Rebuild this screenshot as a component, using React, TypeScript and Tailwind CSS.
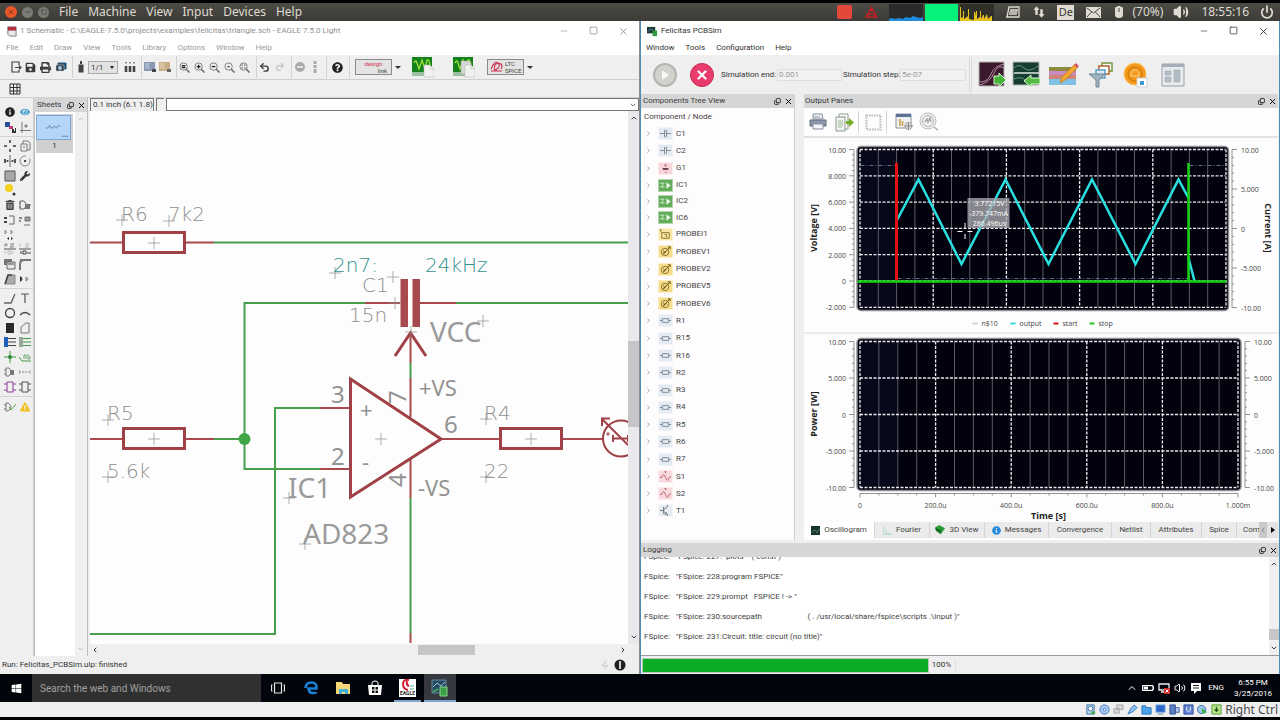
import type { ReactNode } from "react";
import {
  FaBatteryHalf,
  FaExclamationTriangle,
  FaEye,
  FaInfoCircle,
  FaPrint,
  FaQuestionCircle,
  FaSave,
  FaTrashAlt,
  FaWindows,
  FaWrench,
} from "react-icons/fa";
import {
  ChevronDown,
  ChevronLeft,
  ChevronRight,
  ChevronUp,
  Copy,
  Minus,
  Power,
  Redo2,
  Square,
  Undo2,
  Volume2,
  X,
} from "lucide-react";

type ArtProps = { className?: string; box?: string; children: ReactNode };

function Art({ className = "size-3", box = "0 0 12 12", children }: ArtProps) {
  return (
    <svg className={`shrink-0 ${className}`} viewBox={box} fill="none" stroke="#444" aria-hidden="true">
      {children}
    </svg>
  );
}

/* ---------- host top bar ---------- */

const hostMenus = ["File", "Machine", "View", "Input", "Devices", "Help"];

function HostBar() {
  return (
    <header className="flex h-[18px] items-center bg-linear-to-b from-[#4c4b46] to-[#3c3b37] font-['Noto_Sans',sans-serif] text-[#dfdbd2]">
      <div className="flex items-center gap-[5px] pl-[5px]">
        <button aria-label="Close" className="flex size-[12px] items-center justify-center rounded-full bg-[#e8562a]">
          <X className="size-2 text-[#5a2412]" />
        </button>
        <button aria-label="Minimize" className="flex size-[11px] items-center justify-center rounded-full bg-[#7b7a74]">
          <Minus className="size-2 text-[#3c3b37]" />
        </button>
        <button aria-label="Maximize" className="flex size-[11px] items-center justify-center rounded-full bg-[#7b7a74]">
          <Square className="size-1.5 text-[#3c3b37]" />
        </button>
      </div>
      <nav className="flex gap-[10px] pl-[10px] text-[12px] leading-[14px]">
        {hostMenus.map((name) => (
          <button key={name}>{name}</button>
        ))}
      </nav>
      <div className="ml-auto flex h-full items-center pr-[6px] text-[12px] leading-[14px]">
        <span className="mr-[12px] h-[14px] w-[15px] rounded-xs bg-[#e2493a]" />
        <Art className="mr-[10px] h-3 w-[15px]" box="0 0 15 12">
          <path d="M7.500 1 13 11H2zM7.500 1v5M4 8l7 0M2 11l3-3M13 11l-3-3" stroke="#c41f22" strokeWidth="1.300" />
        </Art>
        <Art className="h-[17px] w-[34px] bg-[#2b2b2b]" box="0 0 34 17">
          <path d="M0 17v-2l3-1 3 1 4-1 4 1 3-2 4 1 3-2 3 1 4 1 3-1v4z" fill="#1f8ddb" stroke="none" />
        </Art>
        <span className="mx-[2px] h-[17px] w-[33px] bg-[#06f07c]" />
        <Art className="mr-[11px] h-[17px] w-[34px] bg-[#2f2e29]" box="0 0 34 17">
          <path
            d="M0 17V3h1v11l2-1V7h1v8l4-3V5h1v10l5 1V8h1v4l1-5h1v8l3-2V7h1v8l2-4h1v4l3-5 1 5 3-3h1v5z"
            fill="#e5c21c"
            stroke="none"
          />
        </Art>
        <Art className="mr-[12px] h-3 w-[15px]" box="0 0 15 12">
          <path d="M4 1h10v10H2zM5 4h8M4.500 6h8M4 8h8M1 11h12" stroke="#dfdbd2" strokeWidth="1.300" />
        </Art>
        <Art className="mr-[11px] h-[14px] w-[14px]" box="0 0 14 14">
          <path d="M4.500 1 8 5H6v5H3V5H1zM9.500 13 6 9h2V4h3v5h2z" fill="#dfdbd2" stroke="#45443f" strokeWidth=".5" />
        </Art>
        <span className="mr-[12px] flex h-[15px] w-[17px] items-center justify-center bg-[#dfdbd2] text-[11px] text-[#3c3b37]">De</span>
        <Art className="mr-[13px] h-[11px] w-[15px]" box="0 0 15 11">
          <path d="M0 0h15v11H0z" fill="#dfdbd2" stroke="none" />
          <path d="m1 1 6.500 5L14 1M1 10l4.500-5M14 10 9.500 5" stroke="#4b4a45" />
        </Art>
        <Art className="mr-[8px] h-[14px] w-[10px]" box="0 0 10 14">
          <path d="M3.500 1h3v1H8q1 0 1 1v7q0 3-4 3t-4-3V3q0-1 1-1h1.500z" fill="#dfdbd2" stroke="none" />
          <path d="M5 3v4" stroke="#4b4a45" />
        </Art>
        <span className="mr-[10px] whitespace-nowrap">(70%)</span>
        <Volume2 className="mr-[12px] size-4 fill-[#dfdbd2]" />
        <time className="mr-[11px] whitespace-nowrap">18:55:16</time>
        <Power className="size-[14px] stroke-[3]" />
      </div>
    </header>
  );
}

/* ---------- shared window parts ---------- */

type TitleProps = { title: string; dim?: boolean; icon: ReactNode };

function TitleBar({ title, dim, icon }: TitleProps) {
  return (
    <div className={`flex h-[20px] items-center gap-[3px] bg-white pl-[6px] ${dim ? "text-[#8f8f8f]" : "text-[#333]"}`}>
      {icon}
      <h2 className="min-w-0 flex-1 truncate">{title}</h2>
      <div className="flex gap-[15px] pr-[8px]">
        <button aria-label="Minimize" className="flex w-[15px] justify-center">
          <Minus className="size-[10px] stroke-[1.5]" />
        </button>
        <button aria-label="Maximize" className="flex w-[15px] justify-center">
          <Square className="size-[9px] stroke-2" />
        </button>
        <button aria-label="Close" className="flex w-[15px] justify-center">
          <X className="size-[11px] stroke-2" />
        </button>
      </div>
    </div>
  );
}

function DockHeader({ title, className = "" }: { title: string; className?: string }) {
  return (
    <div className={`flex h-[14px] items-center bg-[#d6d6d6] text-[#3a3a3a] ${className}`}>
      <h3 className="flex-1 whitespace-nowrap">{title}</h3>
      <div className="flex items-center gap-[3px] pr-[1px] text-black">
        <button aria-label={`Float ${title}`}>
          <Copy className="size-[7px] -scale-y-100 stroke-[2.5]" />
        </button>
        <button aria-label={`Close ${title}`}>
          <X className="size-[9px] stroke-[2.5]" />
        </button>
      </div>
    </div>
  );
}

function Sep() {
  return <span className="h-[22px] w-[5px] shrink-0 border-r border-[#d3d3d3]" />;
}

function Slot({ label, children }: { label: string; children: ReactNode }) {
  return (
    <button aria-label={label} title={label} className="flex h-[15px] w-[15px] shrink-0 items-center justify-center text-[#3c3c3c]">
      {children}
    </button>
  );
}

function Lens({ mark }: { mark: string }) {
  return (
    <Art className="size-[11px]">
      <circle cx="5" cy="5" r="4" stroke="#777" />
      <path d="m8 8 3.500 3.500" strokeWidth="1.600" stroke="#666" />
      <path d={mark} stroke="#222" strokeWidth="1.400" />
    </Art>
  );
}

/* ---------- schematic editor ---------- */

const editorMenus = ["File", "Edit", "Draw", "View", "Tools", "Library", "Options", "Window", "Help"];

function WaveIcon({ two }: { two?: boolean }) {
  return (
    <Art className="size-[22px]" box="0 0 22 22">
      <path d="M0 1h20v19H0z" fill="#15801c" stroke="none" />
      <path d="M0 16h12v4H0z" fill="#9cc0a4" stroke="none" />
      <path d="M2 7q2-4 3 0l2 6 3-9 3 9 2-9q2-1 3 5" stroke="#9be23a" strokeWidth="1.300" />
      {two && <path d="M8 5h8l2 2v11H8z" fill="#d5d9d5" stroke="#aaa" strokeWidth=".5" />}
      <path d="M12 9h6l4 4v8H12z" fill="#f1f3f1" stroke="#b9b9b9" strokeWidth=".6" />
      <path d="M18 9v4h4" stroke="#b9b9b9" strokeWidth=".6" />
    </Art>
  );
}

function EditorToolbar() {
  return (
    <div className="flex h-[25px] items-center overflow-hidden border-b border-[#cfcfcf] bg-[#efefef] pl-[8px]">
      <Slot label="Open">
        <Art><path d="M6 1H2v10h7V9M9 4V1H5M5 6.500h6M9 4.500l2 2-2 2" strokeWidth="1.200" /></Art>
      </Slot>
      <Slot label="Save"><FaSave className="size-[11px]" /></Slot>
      <Slot label="Print"><FaPrint className="size-[11px]" /></Slot>
      <Slot label="CAM">
        <Art>
          <path d="M3 2h8v6H3z" fill="#1e4f74" stroke="#1e4f74" />
          <path d="M1 4h8v6H1z" fill="#2f3a44" stroke="#ddd" strokeWidth=".5" />
          <circle cx="5" cy="7" r="2" fill="#9ec7e4" stroke="none" />
        </Art>
      </Slot>
      <Sep />
      <Slot label="Board">
        <Art><path d="M6 0v3M4.500 4.500h3v6h-3z" fill="#444" strokeWidth="2" /></Art>
      </Slot>
      <div className="relative shrink-0">
        <select
          aria-label="Sheet"
          className="block h-[13px] w-[30px] appearance-none border border-[#a9a9a9] bg-[#e2e2e2] pl-[2px] text-[8px] leading-[11px] text-[#333]"
          defaultValue="1/1"
        >
          <option>1/1</option>
        </select>
        <span className="pointer-events-none absolute top-[5px] right-[4px] size-0 border-x-[2px] border-t-[3px] border-x-transparent border-t-[#222]" />
      </div>
      <span className="w-[4px] shrink-0" />
      <Slot label="Use library">
        <Art><path d="M2 1v2M6 1v2M10 1v2" stroke="#888" strokeWidth="2" strokeDasharray="1 .5" /><path d="M2 5v6M6 5v6M10 5v6" strokeWidth="2.600" /></Art>
      </Slot>
      <Sep />
      <Slot label="Script">
        <Art><path d="M0 1h11v9H0z" fill="#8997b5" stroke="none" /><path d="M1 3h5M1 5h4M1 7h5" stroke="#c8d2e4" /><path d="M8 8h4v3H8z" fill="#444" stroke="none" /></Art>
      </Slot>
      <Slot label="Run ULP">
        <Art><path d="M0 1h11v9H0z" fill="#c9ad84" stroke="none" /><path d="M1 3h5M1 5h4M1 7h5" stroke="#e6d6ba" /><path d="M8 8h4v3H8z" fill="#666" stroke="none" /></Art>
      </Slot>
      <Sep />
      <Slot label="Zoom to fit"><Lens mark="M3 4h4M3 6h4" /></Slot>
      <Slot label="Zoom in"><Lens mark="M3 5h4M5 3v4" /></Slot>
      <Slot label="Zoom out"><Lens mark="M3 5h4" /></Slot>
      <Slot label="Redraw"><Lens mark="M4 5h2" /></Slot>
      <Slot label="Zoom select"><Lens mark="M3 3.500h1M6 3.500h1M3 6.500h1M6 6.500h1" /></Slot>
      <Sep />
      <Slot label="Undo"><Undo2 className="size-[11px] stroke-[3]" /></Slot>
      <Slot label="Redo"><Redo2 className="size-[10px] stroke-[3] text-[#c4c4c4]" /></Slot>
      <Sep />
      <Slot label="Stop">
        <Art><circle cx="6" cy="6" r="5" fill="#aaa" stroke="none" /><path d="M3 6h6" stroke="#eee" strokeWidth="1.600" /></Art>
      </Slot>
      <Slot label="Go">
        <Art><path d="M6 0v3M6 4v3M6 8v4" stroke="#aaa" strokeWidth="3" /></Art>
      </Slot>
      <Sep />
      <span className="w-[3px] shrink-0" />
      <Slot label="Help"><FaQuestionCircle className="size-[11px] text-[#222]" /></Slot>
      <Sep />
      <button aria-label="Design link" className="ml-[5px] flex h-[16px] w-[37px] shrink-0 flex-col border border-[#8b8b8b] bg-[#e3e3e3] px-[4px] text-[6px] leading-[7px] text-[#d23455]">
        <span>design</span>
        <span className="self-end text-[#444]">link</span>
      </button>
      <Caret />
      <button aria-label="Simulate" className="ml-[11px] shrink-0"><WaveIcon /></button>
      <button aria-label="Simulate copy" className="ml-[19px] shrink-0"><WaveIcon two /></button>
      <button aria-label="LTspice" className="ml-[12px] flex h-[16px] w-[37px] shrink-0 items-center gap-[2px] border border-[#8b8b8b] bg-[#e3e3e3] pl-[2px] text-left text-[6px] leading-[7px] text-[#444]">
        <Art className="h-3 w-[13px]" box="0 0 13 12">
          <path d="M1 8Q5-1 8 2T7 8 5 4q2-3 6-1 2 2 0 5M1 10h11" stroke="#cf2c4d" strokeWidth="1.100" />
        </Art>
        <span>LTC<br />SPICE</span>
      </button>
      <Caret />
    </div>
  );
}

function Caret() {
  return <span className="ml-[3px] size-0 shrink-0 border-x-[3px] border-t-[3px] border-x-transparent border-t-[#333]" />;
}

type Tool = { name: string; art: ReactNode };

const toolGroups: { height: string; tools: Tool[] }[] = [
  {
    height: "h-[30px]",
    tools: [
      { name: "Info", art: <FaInfoCircle className="size-[10px] text-[#222]" /> },
      { name: "Show", art: <FaEye className="size-[10px] text-[#3a9bc9]" /> },
      {
        name: "Display",
        art: <Art><path d="M1 1h5v5H1z" fill="#274f9a" stroke="none" /><path d="M5 5h4v3H5z" fill="#c23a7a" stroke="none" /><path d="M9 8v3h3V7" strokeWidth="2" stroke="#333" /></Art>,
      },
      { name: "Mark", art: <Art><path d="M3 1v11M1 9.500h11M7 3v4M5 5h4" stroke="#777" /></Art> },
    ],
  },
  {
    height: "h-[147px]",
    tools: [
      { name: "Move", art: <Art><path d="M6 0v3M6 9v3M0 6h3M9 6h3" strokeWidth="2" stroke="#666" /></Art> },
      { name: "Copy", art: <Art><path d="M2 4h6v7H2zM4 4V1h5l2 2v7H8M4 7h2" stroke="#777" /></Art> },
      { name: "Mirror", art: <Art><path d="M6 0v12" stroke="#666" /><path d="M1 4v4M3.500 5v2M8.500 5v2M11 4v4" strokeWidth="1.800" /></Art> },
      { name: "Rotate", art: <Art><circle cx="6" cy="6" r="5" stroke="#888" strokeDasharray="24 4" /><path d="M5 6h2" strokeWidth="2" /></Art> },
      { name: "Group", art: <Art><path d="M1 1h10v10H1z" fill="#a9a9a9" stroke="#555" /></Art> },
      { name: "Change", art: <FaWrench className="size-[10px] text-[#333]" /> },
      { name: "Paste", art: <Art><circle cx="5" cy="4" r="4" fill="#f4d01c" stroke="none" /><circle cx="10" cy="10" r="1.500" fill="#333" stroke="none" /></Art> },
      { name: "", art: null },
      { name: "Delete", art: <FaTrashAlt className="size-[10px]" /> },
      { name: "Add", art: <Art><path d="M1 2v8h4q4-4 0-8zM0 4h2M0 8h2M8 6h4" stroke="#666" /><path d="M6 5h5v5H6z" fill="#777" stroke="none" /></Art> },
      { name: "Pin swap", art: <Art><path d="M0 4h3M0 8h3" strokeWidth="2" /><path d="M5 2h5v8H5" stroke="#666" /></Art> },
      { name: "Replace", art: <Art><path d="M0 4h3M0 7h2" strokeWidth="2" stroke="#888" /><path d="M6 3h5v4H6zM5 11h6" fill="#999" stroke="#777" /></Art> },
      { name: "Gate swap", art: <Art><path d="M1 1q3 2 0 4zM7 1q3 2 0 4z" fill="#aaa" stroke="#999" /><path d="M5 8v3L3 9.500zM7 8v3l2-1.500z" fill="#333" stroke="none" /></Art> },
      { name: "", art: null },
      { name: "Name", art: <Art><path d="M1 1v3M1 1h2v2M6 1h4L6 4h4" stroke="#888" /><path d="M0 6h12" stroke="#555" /><path d="M1 8v3M4 8h3v3H4zM9 8v3" stroke="#bbb" /></Art> },
      { name: "Value", art: <Art><path d="M1 1v3M6 1h4L6 4h4" stroke="#bbb" /><path d="M0 6h12" stroke="#555" /><path d="M2 8v3M4 8h3v3H4zM8 10h4" stroke="#444" /></Art> },
      { name: "Smash", art: <Art><path d="M0 1h8v6H0z" fill="#777" stroke="none" /><path d="M3 4h8v7H3z" fill="#e8e8e8" stroke="#666" /><path d="M4 6h6" /></Art> },
      { name: "Miter", art: <Art><path d="M1 12V6q0-4 5-4h6M1 2h3" stroke="#777" strokeWidth="2" /></Art> },
      { name: "Split", art: <Art><path d="M1 11 4 2h7v9z" fill="#aaa" stroke="#888" /><path d="m1 11 3-9h4" strokeWidth="1.600" /></Art> },
      { name: "Optimize", art: <Art><path d="M1 3q5 3 0 6z" fill="#333" stroke="none" /><path d="M7 4q4 2 0 4z" fill="#bbb" stroke="#888" /></Art> },
    ],
  },
  {
    height: "h-[103px]",
    tools: [
      { name: "Line", art: <Art><path d="M0 11h7l4-9" stroke="#666" strokeWidth="1.400" /></Art> },
      { name: "Text", art: <Art><path d="M2 2h8M6 2v9" stroke="#555" strokeWidth="1.200" /></Art> },
      { name: "Circle", art: <Art><circle cx="6" cy="6" r="4.500" strokeWidth="1.300" /></Art> },
      { name: "Arc", art: <Art><path d="M1 8q5-5 10 0" strokeWidth="1.500" /></Art> },
      { name: "Rectangle", art: <Art><path d="M2 1h8v10H2z" fill="#2b2b2b" stroke="none" /></Art> },
      { name: "Polygon", art: <Art><path d="M2 11V5l5-4h3v10z" stroke="#777" /></Art> },
      { name: "Bus", art: <Art><path d="M0 1h4v10H0z" fill="#1f5fc0" stroke="none" /><path d="M4 2.500h8M4 6h8M4 9.500h8" /></Art> },
      { name: "Net", art: <Art><path d="M0 1h4v10H0z" fill="#9aa79a" stroke="none" /><path d="M4 2.500h8M4 6h8M4 9.500h8" stroke="#3d9a46" /></Art> },
      { name: "Junction", art: <Art><path d="M6 0v12M0 6h12" stroke="#3d9a46" /><circle cx="6" cy="6" r="2" fill="#2c8a36" stroke="none" /></Art> },
      { name: "Label", art: <Art><path d="m0 6 3 4h9" stroke="#3d9a46" /><path d="M5 8V4h2v4M9 3v5h2V5" stroke="#6aa770" /></Art> },
      { name: "Attribute", art: <Art><path d="M2 2v8h3q4-4 0-8zM0 4h2M0 8h2" stroke="#777" /><path d="M6 4h4v5H6z" fill="#777" stroke="none" /></Art> },
      { name: "Dimension", art: <Art><path d="M0 4v4M12 4v4M0 6h12" stroke="#888" strokeDasharray="2 1" /></Art> },
      { name: "Module", art: <Art><path d="M3 1h6v10H3zM0 3h3M0 9h3M9 3h3M9 9h3" stroke="#8a3f9b" /></Art> },
      { name: "Port", art: <Art><path d="M3 1h6v10H3zM0 3h3M0 9h3M9 3h3M9 9h3" stroke="#555" /></Art> },
    ],
  },
  {
    height: "h-[15px]",
    tools: [
      { name: "ERC", art: <Art><path d="M2 2v8h2q6-4 0-8zM0 4h2M0 8h2" stroke="#777" /><path d="m5 6 2 3 5-6" stroke="#5aa93d" /></Art> },
      { name: "Errors", art: <FaExclamationTriangle className="size-[10px] text-[#efbf1a]" /> },
    ],
  },
];

function Toolbox() {
  return (
    <div className="w-[34px] shrink-0 border-r border-[#cfcfcf] bg-[#efefef] pt-[4px]">
      {toolGroups.map((group, i) => (
        <div key={i} className="border-b border-[#d3d3d3] py-[2px] pl-[2px] last:border-0">
          <div className={`grid auto-rows-fr grid-cols-2 ${group.height}`}>
            {group.tools.map((tool, n) =>
              tool.name ? (
                <button key={n} aria-label={tool.name} className="flex items-center justify-center text-[#444]">
                  {tool.art}
                </button>
              ) : (
                <span key={n} />
              ),
            )}
          </div>
        </div>
      ))}
    </div>
  );
}

function SheetsPanel() {
  return (
    <aside className="flex w-[54px] shrink-0 flex-col border-r border-[#bdbdbd]">
      <DockHeader title="Sheets" className="pl-[3px]" />
      <div className="flex flex-1 border-l border-[#bdbdbd] bg-white">
        <div className="flex-1">
          <button className="mt-[2px] ml-[1px] block h-[39px] w-[37px] bg-[#d0d0d0] text-[8px] text-[#333]">
            <svg className="block h-[25px] w-[35px] border border-[#7fa6d6] bg-[#b5d6fb]" viewBox="0 0 35 25" aria-hidden="true">
              <path d="M9 13h3l1-3 2 3h2l1-2 3 2 2-3 2 2M26 22h8" stroke="#6a87b0" fill="none" />
            </svg>
            1
          </button>
        </div>
        <div className="flex w-[12px] flex-col items-center justify-between bg-[#f0f0f0] py-[3px] text-[#a8a8a8]">
          <ChevronUp className="size-2" />
          <ChevronDown className="size-2" />
        </div>
      </div>
    </aside>
  );
}

const crosses = [
  [122, 220], [169, 221], [335, 273], [393, 277], [395, 303], [483, 321], [411, 332], [108, 420],
  [108, 477], [289, 498], [305, 544], [381, 439], [486, 419], [486, 477], [154, 243], [154, 439], [531, 439],
];

function Schematic() {
  return (
    <svg
      className="block h-[532px] w-full bg-[#fdfdfd]"
      viewBox="90 111 538 532"
      preserveAspectRatio="xMinYMin slice"
      role="img"
      aria-label="Schematic"
      fill="none"
    >
      <g stroke="#46a04c" strokeWidth="2">
        <path d="M214 242.500H628M365 303H244.500V469H320M214 439H244M320 408H275V634H90M456 303H628M410.500 363V378M410.500 498V633" />
      </g>
      <circle cx="244.500" cy="439" r="6" fill="#3fa647" />
      <g stroke="#a8494d" strokeWidth="2">
        <path d="M90 242.500H123M185 242.500H214M90 439H123M185 439H214M365 303H400M420 303H456M320 408H350M320 469H350" />
        <path d="M410.500 333V363M410.500 378V417M410.500 459V498M410.500 633V643M441 439H500M562 439H603" />
      </g>
      <g stroke="#a04147" strokeWidth="3">
        <path d="M123.500 232.500H184.500V252.500H123.500zM123.500 428.500H184.500V448.500H123.500zM500.500 428.500H561.500V448.500H500.500z" />
        <path d="M350.500 379V497L441 439zM395 356 410.500 333 426 356" />
      </g>
      <path d="M400.500 279h7.500v48h-7.500zM412.500 279h7.500v48h-7.500z" fill="#a8494d" />
      <g stroke="#a04147" strokeWidth="2">
        <circle cx="621" cy="438.500" r="18" />
        <path d="M602 419 628 445M602 426V418.500H610M613 435V442M628 435V442M613 438.500H628" />
      </g>
      <path d="M606 434h4M608 432v4" stroke="#a04147" />
      <path
        d={crosses.map(([x, y]) => `M${x - 6} ${y}h12M${x} ${y - 6}v12`).join("")}
        stroke="#8b8b8b"
        strokeOpacity=".7"
      />
      <g className="fill-[#8f8f8f] font-['DejaVu_Sans',sans-serif] text-[20px] font-extralight">
        <text x="121" y="221">R6</text>
        <text x="168" y="221">7k2</text>
        <text x="362" y="292">C1</text>
        <text x="349" y="322">15n</text>
        <text x="107" y="420">R5</text>
        <text x="107" y="478">5.6k</text>
        <text x="484" y="420">R4</text>
        <text x="484" y="478">22</text>
        <g className="fill-[#2f928e]">
          <text x="333" y="272">2n7:</text>
          <text x="425" y="272">24kHz</text>
        </g>
      </g>
      <g className="fill-[#9a9a9a] font-['Noto_Sans',sans-serif] text-[28px]">
        <text x="430" y="342">VCC</text>
        <text x="303" y="544">AD823</text>
        <text x="288" y="498">IC1</text>
      </g>
      <g className="fill-[#939393] font-['Noto_Sans',sans-serif] text-[22px]">
        <text x="419" y="396">+VS</text>
        <text x="418" y="496">-VS</text>
        <text x="360" y="418">+</text>
        <text x="362" y="470">-</text>
      </g>
      <g className="fill-[#939393] font-['Noto_Sans',sans-serif] text-[24px]">
        <text x="444" y="433">6</text>
        <text x="331" y="403">3</text>
        <text x="331" y="465">2</text>
        <text transform="translate(406 404) rotate(-90)">7</text>
        <text transform="translate(406 487) rotate(-90)">4</text>
      </g>
    </svg>
  );
}

function SchematicEditor() {
  return (
    <section className="flex min-w-0 flex-col border-r border-[#8a8f96] bg-[#efefef]">
      <TitleBar
        dim
        title={"1 Schematic - C:\\EAGLE-7.5.0\\projects\\examples\\felicitas\\triangle.sch - EAGLE 7.5.0 Light"}
        icon={
          <Art className="size-[11px]">
            <path d="M2 1h9v10H4L2 9z" fill="#e9e9e9" stroke="#777" />
            <path d="M2 1h9v4H2z" fill="#b5303c" stroke="none" />
          </Art>
        }
      />
      <nav className="flex h-[14px] items-center gap-[11px] bg-white pl-[6px] text-[#9a9a9a]">
        {editorMenus.map((name) => (
          <button key={name}>{name}</button>
        ))}
      </nav>
      <EditorToolbar />
      <div className="flex h-[17px] items-center pl-[7px]">
        <Slot label="Grid">
          <Art><path d="M1 1h10v10H1zM4.500 1v10M8 1v10M1 4.500h10M1 8h10" stroke="#333" /></Art>
        </Slot>
      </div>
      <div className="flex flex-1 border-t border-[#d3d3d3]">
        <Toolbox />
        <SheetsPanel />
        <div className="flex min-w-0 flex-1 flex-col pl-[2px]">
          <div className="flex h-[13px] items-stretch gap-[2px] text-[8px] leading-[12px] text-[#333]">
            <output className="w-[64px] border-t border-r border-l border-[#777] pl-[2px] whitespace-nowrap">0.1 inch (6.1 1.8)</output>
            <span className="w-[8px] border-t border-l border-[#777]" />
            <div className="flex flex-1 items-center border border-[#777] bg-white pr-[1px]">
              <input aria-label="Command" className="min-w-0 flex-1" />
              <ChevronDown className="size-2" />
            </div>
          </div>
          <div className="flex flex-1">
            <div className="min-w-0 flex-1 bg-[#fdfdfd]">
              <Schematic />
            </div>
            <div className="flex w-[11px] flex-col items-center bg-[#e9e9ec] py-[3px] text-[#444]">
              <ChevronUp className="size-2 stroke-[3]" />
              <span className="mt-[219px] h-[86px] w-full bg-[#c6c6c9]" />
              <ChevronDown className="mt-auto size-2 stroke-[3]" />
            </div>
          </div>
          <div className="flex h-[12px] items-center justify-between pr-[12px] pl-[1px] text-[#333]">
            <ChevronLeft className="size-2 stroke-[3]" />
            <span className="ml-[175px] h-[10px] w-[57px] bg-[#c6c6c6]" />
            <ChevronRight className="size-2 stroke-[3]" />
          </div>
        </div>
      </div>
      <footer className="flex h-[18px] items-center bg-[#efefef] pl-[2px] text-[#333]">
        <span className="flex-1">Run: Felicitas_PCBSim.ulp: finished</span>
        <Art className="mr-[4px] size-[10px]"><path d="M7 1 3 7h6l-4 4" stroke="#bbb" /></Art>
        <Art className="mr-[13px] size-3"><circle cx="6" cy="6" r="5.500" fill="#222" stroke="none" /><path d="M6 2v8" stroke="#fff" strokeWidth="1.600" /></Art>
      </footer>
    </section>
  );
}

/* ---------- simulator ---------- */

type Kind = "cap" | "source" | "ic" | "probeI" | "probeV" | "res" | "sine" | "transistor";

const components: [string, Kind][] = [
  ["C1", "cap"], ["C2", "cap"], ["G1", "source"], ["IC1", "ic"], ["IC2", "ic"], ["IC6", "ic"],
  ["PROBEI1", "probeI"], ["PROBEV1", "probeV"], ["PROBEV2", "probeV"], ["PROBEV5", "probeV"], ["PROBEV6", "probeV"],
  ["R1", "res"], ["R15", "res"], ["R16", "res"], ["R2", "res"], ["R3", "res"], ["R4", "res"], ["R5", "res"],
  ["R6", "res"], ["R7", "res"], ["S1", "sine"], ["S2", "sine"], ["T1", "transistor"],
];

const kindArt: Record<Kind, { tone: string; art: ReactNode }> = {
  cap: { tone: "bg-[#e4eaf1]", art: <path d="M1 7h5M8 7h5M6 3v8M8 3v8" stroke="#7b8794" /> },
  source: { tone: "bg-[#f8d5da]", art: <><path d="M4 7.500h6" stroke="#412" strokeWidth="1.600" /><path d="M7 2v3M5.500 3.500h3M6 11h2" stroke="#c77" /></> },
  ic: { tone: "bg-[#63ad5d]", art: <><path d="M1 4.500h5M1 8.500h5M4 4v5" stroke="#c8ecc4" /><path d="M8 3.500 12.500 7 8 10.500z" fill="#e9fbe6" stroke="none" /></> },
  probeI: { tone: "bg-[#f9e6a4]", art: <path d="M3 5h8v6H3zM3 5 1 2M6 7h2v3M1 2h2" stroke="#8a7328" /> },
  probeV: { tone: "bg-[#f6dc8b]", art: <><circle cx="6.500" cy="7.500" r="4" stroke="#8a7328" /><path d="m5 6 1 3 2-3M4 10l8-8M9.500 2H12v2.500" stroke="#6b581c" /></> },
  res: { tone: "bg-[#e4ebf2]", art: <path d="M3.500 5h7v4h-7zM1 7h2.500M10.500 7H13" stroke="#7b8794" /> },
  sine: { tone: "bg-[#fadade]", art: <path d="M1 8h2q2-6 4 0t4 0l2-1M6 2h2M7 1v2" stroke="#b55b68" /> },
  transistor: { tone: "bg-[#e8edf2]", art: <path d="M1 7h4M5 3v8M5 6l4-3V1M5 8l4 3v2M8 9v2H6" stroke="#66717c" /> },
};

function ComponentTree() {
  return (
    <aside className="flex w-[154px] shrink-0 flex-col border-r border-[#cfcfcf]">
      <DockHeader title="Components Tree View" className="pl-[2px]" />
      <div className="flex flex-1 flex-col bg-[#fefcfd] pb-[21px]">
        <h4 className="h-[17px] pl-[3px] leading-[18px] text-[#444]">Component / Node</h4>
        <ul className="flex flex-1 flex-col text-[#444]">
          {components.map(([name, kind]) => (
            <li key={name} className={`flex grow items-center pl-[4px] ${kind === "ic" || kind === "transistor" ? "basis-[16px]" : "basis-[17px]"}`}>
              <button aria-label={`Expand ${name}`}>
                <ChevronRight className="size-[7px] stroke-[3] text-[#999]" />
              </button>
              <span className={`ml-[6px] flex h-[13px] w-[15px] shrink-0 items-center justify-center border border-white/50 ${kindArt[kind].tone}`}>
                <Art className="size-[13px]" box="0 0 14 14">{kindArt[kind].art}</Art>
              </span>
              <span className="ml-[3px]">{name}</span>
            </li>
          ))}
        </ul>
      </div>
    </aside>
  );
}

type PlotProps = { left: number; right: number; top: number; bottom: number; rows: number; gapX: number; gapY: number };

function PlotFrame({ left, right, top, bottom, rows, gapX, gapY }: PlotProps) {
  const cols = Array.from({ length: 21 }, (_, i) => i);
  return (
    <g>
      <rect x={left - 3} y={top - 3} width={right - left + 6} height={bottom - top + 6} rx="4" fill="#02020f" stroke="#8d8d93" strokeWidth="1.500" />
      <rect x={left} y={top} width={gapX * 2} height={bottom - top} fill="#08081b" />
      {cols.map((i) => (
        <path
          key={i}
          d={`M${left + i * gapX} ${top}V${bottom}`}
          stroke={i % 4 ? "#5c5c66" : "#f2f2f2"}
          strokeDasharray={i % 4 ? undefined : "3 1.500"}
          strokeWidth={i % 4 ? 1 : 1.3}
        />
      ))}
      {Array.from({ length: rows }, (_, i) => (
        <path key={i} d={`M${left} ${top + i * gapY}H${right}`} stroke="#e9e9e9" strokeDasharray="3 1.500" strokeWidth="1.300" />
      ))}
    </g>
  );
}

type AxisProps = { x: number; side: "left" | "right"; top: number; gap: number; labels: string[] };

function Axis({ x, side, top, gap, labels }: AxisProps) {
  const dir = side === "left" ? -1 : 1;
  const minor = Array.from({ length: (labels.length - 1) * 5 + 1 }, (_, i) => i);
  return (
    <g>
      <path
        d={`M${x} ${top}V${top + gap * (labels.length - 1)}` + minor.map((i) => `M${x} ${top + (i * gap) / 5}h${(i % 5 ? 2 : 5) * dir}`).join("")}
        stroke="#777"
        strokeWidth=".8"
      />
      {labels.map((text, i) => (
        <text key={text} x={x + (side === "left" ? -8 : 9)} y={top + i * gap + 3} textAnchor={side === "left" ? "end" : "start"}>
          {text}
        </text>
      ))}
    </g>
  );
}

const legend = [
  { name: "n$10", x: 981, color: "#cfd3d6" },
  { name: "output", x: 1019, color: "#2fd9dc" },
  { name: "start", x: 1062, color: "#d01818" },
  { name: "stop", x: 1098, color: "#1fc41f" },
];

const timeTicks = ["0", "200.0u", "400.0u", "600.0u", "800.0u", "1.000m"];

function VoltagePlot() {
  return (
    <svg className="block h-[194px] w-full fill-[#444] font-['Open_Sans',sans-serif] text-[7px]" viewBox="804 138 473 194" role="img" aria-label="Voltage and current over time">
      <PlotFrame left={859.5} right={1225} top={149.5} bottom={307.5} rows={7} gapX={18.3} gapY={26.3} />
      <Axis x={853.5} side="left" top={149.5} gap={26.3} labels={["10.00", "8.000", "6.000", "4.000", "2.000", "0", "-2.000"]} />
      <Axis x={1231.5} side="right" top={149.5} gap={39.5} labels={["10.00", "5.000", "0", "-5.000", "-10.00"]} />
      <path d="M860 165.500H896M1189 165.500H1225M897 278.500H1187" stroke="#5d6f8f" strokeDasharray="4 2 1 2" />
      <g fill="none">
        <path
          d="M896 221 918 179.500 961 264 1005 179.500 1048 264 1091.500 179.500 1135 264 1178 179.500 1188 198M1188 258 1194 281"
          stroke="#29dfe0"
          strokeWidth="2.500"
        />
        <path d="M896 163V281" stroke="#e01313" strokeWidth="3" />
        <path d="M857 281.500H1226M1188 163V282" stroke="#14d314" strokeWidth="2.500" />
        <path d="M957 231.500H962M967 231.500H972M964.500 223V229M964.500 234V239" stroke="#fff" />
      </g>
      <rect x="967" y="198" width="42" height="30" fill="#a6a6ac" fillOpacity=".8" />
      <g fill="#fff" textAnchor="middle">
        <text x="989" y="206">3.77215V</text>
        <text x="988" y="216">-379.747mA</text>
        <text x="989" y="226">286.496us</text>
      </g>
      <g className="fill-[#222] text-[9px] font-bold" textAnchor="middle">
        <text transform="translate(816 228) rotate(-90)">Voltage [V]</text>
        <text transform="translate(1264 228) rotate(90)">Current [A]</text>
      </g>
      {legend.map((item) => (
        <g key={item.name}>
          <path d={`M${item.x - 9} 323.500h5`} stroke={item.color} strokeWidth="2" />
          <text x={item.x} y="326">{item.name}</text>
        </g>
      ))}
    </svg>
  );
}

function PowerPlot() {
  return (
    <svg className="block h-[188px] w-full fill-[#444] font-['Open_Sans',sans-serif] text-[7px]" viewBox="804 334 473 188" role="img" aria-label="Power over time">
      <PlotFrame left={859.5} right={1237.5} top={341.5} bottom={487.5} rows={5} gapX={18.9} gapY={36.5} />
      <Axis x={853.5} side="left" top={341.5} gap={36.5} labels={["10.00", "5.000", "0", "-5.000", "-10.00"]} />
      <Axis x={1244.5} side="right" top={341.5} gap={36.5} labels={["10.00", "5.000", "0", "-5.000", "-10.00"]} />
      <path
        d={"M859.500 493.500H1237.500" + Array.from({ length: 21 }, (_, i) => `M${859.5 + i * 18.9} 493.500v${i % 4 ? 2 : 4}`).join("")}
        stroke="#777"
        strokeWidth=".8"
      />
      {timeTicks.map((text, i) => (
        <text key={text} x={859.5 + i * 75.6} y="508" textAnchor="middle">{text}</text>
      ))}
      <g className="fill-[#222] text-[9px] font-bold" textAnchor="middle">
        <text transform="translate(816 414) rotate(-90)">Power [W]</text>
        <text x="1048" y="519">Time [s]</text>
      </g>
    </svg>
  );
}

const tabs = [
  { name: "Oscillogram", width: "w-[71px]", icon: <Art className="size-[9px]"><path d="M0 0h12v12H0z" fill="#16362c" stroke="none" /><path d="m1 9 4-4 3 4 3-5" stroke="#6b8f7c" /></Art> },
  { name: "Fourier", width: "w-[55px]", icon: <Art className="size-[9px]"><path d="M1 1v10h11M4 11V5M7 11V8" stroke="#9fd0bd" /></Art> },
  { name: "3D View", width: "w-[55px]", icon: <Art className="size-[10px]"><path d="m0 3 5-3 7 4-5 7z" fill="#2a9c37" stroke="none" /><path d="m0 3 7 3v5L1 7z" fill="#167022" stroke="none" /></Art> },
  { name: "Messages", width: "w-[64px]", icon: <FaInfoCircle className="size-[9px] text-[#2489d8]" /> },
  { name: "Convergence", width: "w-[63px]" },
  { name: "Netlist", width: "w-[39px]" },
  { name: "Attributes", width: "w-[51px]" },
  { name: "Spice", width: "w-[35px]" },
];

function OutputPanes() {
  return (
    <section className="flex min-w-0 flex-1 flex-col">
      <DockHeader title="Output Panes" className="pl-[1px]" />
      <div className="flex flex-1 flex-col bg-[#fdfdfd]">
        <div className="flex h-[30px] items-center border-b-2 border-[#e3e3e3] pl-[5px]">
          <button aria-label="Print plot">
            <Art className="size-[18px]" box="0 0 18 18">
              <path d="M4 1h9l1 5H4z" fill="#eef1f5" stroke="#8891a0" /><path d="M1 7h16v6H1z" fill="#8d97ab" stroke="#606a7d" />
              <path d="M4 11h10v5H4z" fill="#f4f6f9" stroke="#8891a0" /><path d="M5 4h6" stroke="#8891a0" />
            </Art>
          </button>
          <button aria-label="Export plot" className="ml-[8px]">
            <Art className="size-[19px]" box="0 0 19 19">
              <path d="M4 1h9v15H4z" fill="#fff" stroke="#8c9a8c" /><path d="M1 4h9v14H1z" fill="#f0f4f0" stroke="#8c9a8c" />
              <path d="M3 8h5M3 10h5M3 12h5M3 14h4M6 4h5" stroke="#a3ba98" /><path d="M11 8h3V5l5 4.500-5 4.500v-3h-3z" fill="#71ae25" stroke="none" />
            </Art>
          </button>
          <Sep />
          <button aria-label="Selection" className="ml-[6px]">
            <Art className="size-[17px]" box="0 0 17 17"><path d="M1.500 1.500h14v14h-14z" stroke="#bbb" strokeWidth="2" strokeDasharray="1.500 1" /></Art>
          </button>
          <Sep />
          <button aria-label="Plot settings" className="ml-[8px]">
            <Art className="size-[18px]" box="0 0 18 18">
              <path d="M1 1h15v14H1z" fill="#eef0f2" stroke="#8b929b" /><path d="M1 1h15v3H1z" fill="#5d7395" stroke="none" />
              <path d="M5 6v7M7.500 8v5" stroke="#c7a24b" strokeWidth="1.600" /><circle cx="13.500" cy="13" r="3.500" fill="#ddd" stroke="#666" strokeDasharray="1.500 1" /><path d="M10 13h7M13.500 10v6" stroke="#888" />
            </Art>
          </button>
          <button aria-label="Zoom plot" className="ml-[6px]">
            <Art className="size-[20px]" box="0 0 20 20">
              <circle cx="9" cy="9" r="8" fill="#f2f2f2" stroke="#bbb" /><circle cx="9" cy="9" r="5.500" stroke="#b2b2b2" />
              <path d="m6 10 2-3 1 3 2-4 1 4M15 15l4 3" stroke="#aaa" strokeWidth="1.500" />
            </Art>
          </button>
        </div>
        <VoltagePlot />
        <div className="h-[2px] bg-[#ececec]" />
        <PowerPlot />
        <div className="flex h-[16px] bg-[#ebebeb]" role="tablist">
          {tabs.map((tab, i) => (
            <button
              key={tab.name}
              role="tab"
              aria-selected={i === 0}
              className={`flex shrink-0 items-center justify-center gap-[4px] border-r border-[#d3d3d3] whitespace-nowrap text-[#444] ${tab.width} ${i === 0 ? "bg-white" : ""}`}
            >
              {tab.icon}
              {tab.name}
            </button>
          ))}
          <button role="tab" aria-selected={false} className="min-w-0 flex-1 overflow-hidden pl-[6px] text-left text-[#444]">Components</button>
          <button aria-label="Scroll tabs left" className="w-[8px] bg-[#c9c9c9] text-[#888]"><ChevronLeft className="size-2 stroke-[3]" /></button>
          <button aria-label="Scroll tabs right" className="flex w-[11px] items-center justify-center bg-[#e3e3e3]">
            <span className="size-0 border-y-[3px] border-l-[4px] border-y-transparent border-l-black" />
          </button>
        </div>
      </div>
    </section>
  );
}

function SimToolbar() {
  return (
    <div className="flex h-[39px] items-center bg-[#efefef] pl-[12px]">
      <button aria-label="Run" className="flex size-[24px] items-center justify-center rounded-full border-2 border-[#b4b4b0] bg-[#d2d2cd]">
        <Art className="size-3"><path d="m3 1 7 5-7 5z" fill="#f7f7f7" stroke="none" /></Art>
      </button>
      <button aria-label="Abort" className="ml-[13px] flex size-[24px] items-center justify-center rounded-full border border-[#c92b55] bg-[#ea3c6c] text-white">
        <X className="size-[14px] stroke-[4]" />
      </button>
      <label htmlFor="sim-end" className="ml-[7px] w-[56px] whitespace-nowrap">Simulation end:</label>
      <input id="sim-end" defaultValue="0.001" className="h-[12px] w-[65px] border border-[#dedede] bg-[#f1f1f1] pl-[1px] text-[#999]" />
      <label htmlFor="sim-step" className="ml-[1px] w-[57px] whitespace-nowrap">Simulation step:</label>
      <input id="sim-step" defaultValue="5e-07" className="h-[12px] w-[66px] border border-[#dedede] bg-[#f1f1f1] pl-[1px] text-[#999]" />
      <span className="ml-[3px] h-[36px] w-[3px] border-x border-[#dadada]" />
      <button aria-label="Oscilloscope" className="ml-[6px]">
        <Art className="size-[28px]" box="0 0 28 28">
          <path d="M1 1h25v24H1z" fill="#3c1a2d" stroke="#b6b6b6" /><path d="M2 21q8 0 11-8t13-10M2 24q10-3 14-12t10-5" stroke="#b78ca6" />
          <path d="M16 15h5v-3l7 7-7 7v-3h-5z" fill="#46b43a" stroke="#d8f5d4" />
        </Art>
      </button>
      <button aria-label="Signals" className="ml-[6px]">
        <Art className="size-[28px]" box="0 0 28 28">
          <path d="M1 1h26v23H1z" fill="#173c31" stroke="#b6b6b6" /><path d="M2 12h25" stroke="#dce8e0" strokeWidth="1.500" /><path d="M2 7q5-5 10 0t14-2M2 18q6-3 12 1" stroke="#5f9a7f" />
          <path d="m12 20 7-6v3h9v6h-9v3z" fill="#55bb45" stroke="#d8f5d4" />
        </Art>
      </button>
      <button aria-label="Colors" className="ml-[9px]">
        <Art className="h-[26px] w-[30px]" box="0 0 30 26">
          <path d="M0 5h27v4H0z" fill="#8d8a3c" stroke="none" /><path d="M0 9h27v4H0z" fill="#c98ac0" stroke="none" /><path d="M0 13h27v4H0z" fill="#d08576" stroke="none" />
          <path d="M0 17h27v6H0z" fill="#82c1e3" stroke="none" /><path d="m11 21 2-6L26 2l3 3-13 13z" fill="#f3a733" stroke="#c47a1b" strokeWidth=".8" />
          <path d="m25 3 2-2 3 3-2 2z" fill="#d65a6e" stroke="none" />
        </Art>
      </button>
      <button aria-label="Filter" className="ml-[9px]">
        <Art className="size-[27px]" box="0 0 27 27">
          <path d="M14 2h10v8H14z" fill="#fff" stroke="#71963d" strokeWidth="1.500" /><path d="M11 5h10v8H11z" fill="#fff" stroke="#b1642b" strokeWidth="1.500" /><path d="M8 9h9v8H8z" fill="#dcedf8" stroke="#5fa0c6" strokeWidth="1.500" />
          <path d="M1 13h16l-6 6v7H8v-7z" fill="#9fb4c0" stroke="#6d8592" />
        </Art>
      </button>
      <button aria-label="Constants" className="ml-[8px]">
        <Art className="size-[26px]" box="0 0 26 26">
          <circle cx="12" cy="12" r="11" fill="#f39a1c" stroke="#ffc35c" /><circle cx="12" cy="12" r="7" stroke="#d97e0a" strokeWidth="1.500" /><path d="M8 14q0-6 4-6t4 6M8 14h8" stroke="#ffd183" />
          <path d="M14 16h10v9H14z" fill="#fff" stroke="#cfcfcf" /><path d="M17 19h4v4h-4z" fill="#3d9bd0" stroke="none" />
        </Art>
      </button>
      <button aria-label="Layout" className="ml-[12px]">
        <Art className="size-[24px]" box="0 0 24 24">
          <path d="M1 1h22v22H1z" fill="#e8ebee" stroke="#9aa1aa" /><path d="M1 1h22v3H1z" fill="#a5adb8" stroke="none" />
          <path d="M4 8h6v4H4zM4 14h6v5H4zM13 7h6v12h-6z" fill="#b4bcc6" stroke="#98a1ac" strokeWidth=".5" />
        </Art>
      </button>
    </div>
  );
}

const logLines = [
  '"FSpice: 227:  plots    ( const )',
  '"FSpice: 228:program FSPICE"',
  '"FSpice: 229:prompt   FSPICE ! -> "',
  '"FSpice: 230:sourcepath                       ( . /usr/local/share/fspice\\scripts .\\input )"',
  '"FSpice: 231:Circuit: title: circuit (no title)"',
];

function Logging() {
  return (
    <section className="mt-[3px]">
      <DockHeader title="Logging" className="pl-[2px]" />
      <div className="flex h-[99px] border-b border-[#9a9a9a] bg-white">
        <div className="flex flex-1 flex-col justify-end overflow-hidden pb-[8px] pl-[3px] text-[#444]">
          {logLines.map((line) => (
            <p key={line} className="flex h-[20px] shrink-0 items-center gap-[6px] whitespace-pre">
              <span>FSpice:</span>
              <span>{line}</span>
            </p>
          ))}
        </div>
        <div className="flex w-[10px] flex-col items-center bg-[#f0f0f0] py-[3px] text-[#444]">
          <ChevronUp className="size-2 stroke-[3]" />
          <span className="mt-auto h-[11px] w-full bg-[#c6c6c6]" />
          <ChevronDown className="mt-[4px] size-2 stroke-[3]" />
        </div>
      </div>
      <div className="flex h-[18px] items-center bg-[#efefef] pl-[1px] text-[#333]">
        <div role="progressbar" aria-label="Simulation" aria-valuenow={100} className="h-[15px] w-[45%] border border-[#b8c9b8] bg-[#08ad23]" />
        <span className="ml-[3px] border-r border-[#ddd] pr-[4px]">100%</span>
      </div>
    </section>
  );
}

function Simulator() {
  return (
    <section className="flex min-w-0 flex-col border-x border-[#4e8cb8] bg-[#efefef] text-[#333]">
      <TitleBar
        title="Felicitas PCBSim"
        icon={
          <Art className="size-[11px]">
            <path d="M0 1h9v7H0z" fill="#1d3b37" stroke="none" /><path d="m1 6 3-3 3 2" stroke="#5a8fb0" /><path d="M6 5h5v6H6z" fill="#2e9a3a" stroke="none" />
          </Art>
        }
      />
      <nav className="flex h-[14px] items-center gap-[11px] bg-white pl-[5px]">
        <button>Window</button>
        <button>Tools</button>
        <button>Configuration</button>
        <button>Help</button>
      </nav>
      <SimToolbar />
      <div className="flex flex-1 gap-[9px] pr-[1px]">
        <ComponentTree />
        <OutputPanes />
      </div>
      <Logging />
    </section>
  );
}

/* ---------- guest task bar and machine status ---------- */

function TaskBar() {
  return (
    <footer className="flex h-[28px] items-center bg-[#02050b] text-white">
      <button aria-label="Start" className="flex w-[32px] justify-center"><FaWindows className="size-[11px]" /></button>
      <input
        aria-label="Search"
        placeholder="Search the web and Windows"
        className="h-full w-[229px] bg-[#303030] pl-[8px] text-[10px] placeholder:text-[#a0a0a0]"
      />
      <button aria-label="Task view" className="flex w-[33px] justify-center">
        <Art className="h-3 w-[14px]" box="0 0 14 12"><path d="M3.500 1h7v10h-7zM1.500 3H.5v6h1M12.500 3h1v6h-1" stroke="#e6e6e6" strokeWidth="1.200" /></Art>
      </button>
      <button aria-label="Edge" className="flex w-[33px] justify-center">
        <Art className="size-[14px]" box="0 0 14 14"><path d="M1.500 7Q2 1.500 7.500 1.500T12.500 7.500H4.500Q5 12 8.500 12T12 11" stroke="#1683da" strokeWidth="2.600" /></Art>
      </button>
      <button aria-label="File Explorer" className="flex w-[32px] justify-center">
        <Art className="size-[14px]" box="0 0 14 14"><path d="M0 1h6l1 2h7v10H0z" fill="#f5d779" stroke="none" /><path d="M3 8h9v5H9v-2H6v2H3z" fill="#3fb3dc" stroke="none" /></Art>
      </button>
      <button aria-label="Store" className="flex w-[32px] justify-center">
        <Art className="size-[16px]" box="0 0 16 16"><path d="M5 5V3q0-2 3-2t3 2v2" stroke="#fff" /><path d="M1 5h14l-1 10H2z" fill="#fff" stroke="none" /><path d="M5 7h2.500v2.500H5zM8.500 7H11v2.500H8.500zM5 10.500h2.500V13H5zM8.500 10.500H11V13H8.500z" fill="#111" stroke="none" /></Art>
      </button>
      <button aria-label="EAGLE" className="ml-[3px] flex h-full w-[27px] items-center justify-center border-y-2 border-t-transparent border-b-[#7ea6cf]">
        <span className="flex h-[18px] w-[17px] flex-col items-center bg-white text-[5px] leading-[5px] font-bold text-[#222]">
          <Art className="h-[12px] w-[14px]" box="0 0 14 12"><path d="M8 1Q2 0 2 5t5 6M6 2q-1 4 2 5" stroke="#d01c35" strokeWidth="2" /><path d="M9 7h4M9 10h4" stroke="#5a9" /></Art>
          EAGLE
        </span>
      </button>
      <button aria-label="PCBSim" className="ml-[3px] flex h-full w-[32px] items-center justify-center border-y-2 border-t-transparent border-b-[#7ea6cf] bg-[#35393f]">
        <Art className="size-[18px]" box="0 0 18 18"><path d="M1 1h14v13H1z" fill="#254b63" stroke="#6a8797" /><path d="m2 8 4-4 4 3 4-4" stroke="#9cc3d8" /><path d="M9 8h7v9H9z" fill="#39a044" stroke="#8bd08f" /><path d="m2 13 5-3" stroke="#4da85a" strokeWidth="2" /></Art>
      </button>
      <div className="ml-auto flex items-center gap-[4px] pr-[8px]">
        <ChevronUp className="size-3" />
        <FaBatteryHalf className="size-3" />
        <Art className="size-3"><path d="M1 2h10v6H1zM3 10h4" stroke="#eee" strokeWidth="1.300" /><path d="M6 6h6v6H6z" fill="#d12b2b" stroke="none" /><path d="m7.500 7.500 3 3M10.500 7.500l-3 3" stroke="#fff" /></Art>
        <Volume2 className="size-3" />
        <Art className="size-3"><path d="M1 1h10v8H7l-3 3V9H1z" fill="#fff" stroke="none" /><path d="M3 3.500h6M3 6h6" stroke="#222" /></Art>
        <span className="ml-[2px]">ENG</span>
        <time className="ml-[6px] text-center leading-[11px]">
          6:55 PM
          <br />
          3/25/2016
        </time>
      </div>
    </footer>
  );
}

const statusIcons = [
  { name: "Hard disks", art: <><path d="M2 1h8v10H2z" fill="#b8d6ef" stroke="#3a6ea3" /><circle cx="6" cy="5" r="2.500" fill="#fff" stroke="#3a6ea3" /><path d="M7 8h4v3H7z" fill="#46a84c" stroke="none" /></> },
  { name: "Optical drives", art: <><circle cx="6" cy="6" r="5" fill="#a9cdf0" stroke="#3a6ec3" /><circle cx="6" cy="6" r="1.500" fill="#fff" stroke="#3a6ec3" /></> },
  { name: "Network", art: <><path d="M4 1h7v5H4zM1 5h6v5H1z" fill="#d5d5d5" stroke="#aaa" /></> },
  { name: "USB", art: <path d="m1 11 3-6 4-4 3 3-4 4z" fill="#8dbff0" stroke="#2f6fc0" /> },
  { name: "Shared folders", art: <path d="M1 2h4l1 2h5v7H1z" fill="#4ba3e8" stroke="#1f6fb8" /> },
  { name: "Display", art: <><path d="M1 1h10v8H1z" fill="#2f66c9" stroke="#7fb0ee" /><path d="M3 11h6" stroke="#777" /></> },
  { name: "Recording", art: <><path d="M1 1h6v10H1z" fill="#5b7fc0" stroke="#33549a" /><path d="M7 4h4v5H7z" fill="#b8cdf0" stroke="#33549a" /></> },
  { name: "Features", art: <><path d="M1 1h10v10H1z" fill="#5e7fd0" stroke="#2e4a9a" /><path d="M4 3v4q2 3 4 0V3" stroke="#fff" /></> },
  { name: "Mouse integration", art: <><circle cx="5" cy="6" r="4.500" fill="#9bc6ea" stroke="#3a6ea3" /><path d="m5 4 6 5-5 2z" fill="#3fae49" stroke="none" /></> },
  { name: "Keyboard", art: <><path d="M1 1h10v10H1z" fill="#b9e48a" stroke="#4c9a2c" /><path d="M6 3v5M4 6l2 2 2-2" stroke="#1f5d16" strokeWidth="1.500" /></> },
];

function MachineStatus() {
  return (
    <div className="flex h-[15px] items-center justify-end gap-[3px] bg-[#efefef] pr-[2px] font-['Noto_Sans',sans-serif] text-[12px] text-[#4a4a4a]">
      {statusIcons.map((item) => (
        <button key={item.name} aria-label={item.name}>
          <Art className="size-[11px]">{item.art}</Art>
        </button>
      ))}
      <span className="leading-[15px] whitespace-nowrap">Right Ctrl</span>
    </div>
  );
}

export default function App() {
  return (
    <div className="flex min-h-screen flex-col border-y-[3px] border-black bg-[#efefef] font-[Roboto,'Open_Sans',sans-serif] text-[8px] leading-[12px]">
      <HostBar />
      <main className="grid flex-1 grid-cols-2">
        <SchematicEditor />
        <Simulator />
      </main>
      <TaskBar />
      <MachineStatus />
    </div>
  );
}
